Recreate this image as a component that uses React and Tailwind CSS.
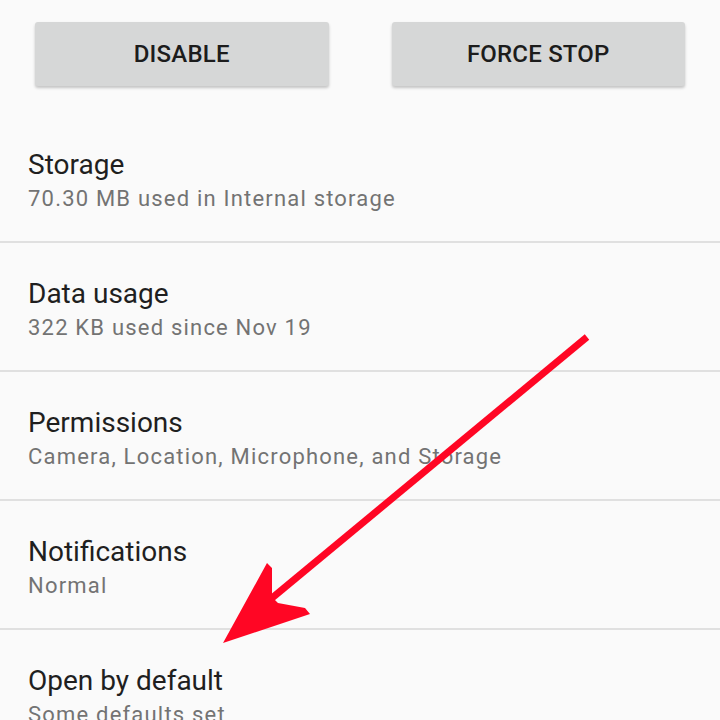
import React from 'react';

const rows = [
  { title: 'Storage', sub: '70.30 MB used in Internal storage' },
  { title: 'Data usage', sub: '322 KB used since Nov 19' },
  { title: 'Permissions', sub: 'Camera, Location, Microphone, and Storage' },
  { title: 'Notifications', sub: 'Normal' },
  { title: 'Open by default', sub: 'Some defaults set' },
];

const ActionButton = ({ label }) => (
  <button className="flex-1 h-[64px] rounded-[3px] bg-[#d6d7d7] shadow-[0_2px_3px_rgba(0,0,0,0.22)] text-[24px] font-medium text-[#1c1c1c] tracking-[0.2px]">
    {label}
  </button>
);

const App = () => {
  return (
    <div className="relative w-[720px] h-[720px] overflow-hidden bg-[#fafafa] font-['Roboto',sans-serif]">
      {/* App actions */}
      <div className="flex gap-[63px] px-[35px] pt-[22px] pb-[28px]">
        <ActionButton label="DISABLE" />
        <ActionButton label="FORCE STOP" />
      </div>

      {/* Settings list */}
      <div>
        {rows.map(r => (
          <div key={r.title}>
            <div className="px-[28px] pt-[34px] pb-[27px]">
              <div className="text-[28px] leading-[34px] text-[#1f1f1f]">{r.title}</div>
              <div className="mt-[2px] text-[22px] leading-[30px] tracking-[1.2px] text-[#737373] whitespace-nowrap">{r.sub}</div>
            </div>
            <div className="h-[2px] bg-[#e0e0e0]" />
          </div>
        ))}
      </div>

      {/* Red pointer arrow */}
      <svg className="absolute inset-0 pointer-events-none" width="720" height="720" viewBox="0 0 720 720">
        <line x1="587" y1="337" x2="272" y2="598" stroke="#ff0624" strokeWidth="7" />
        <polygon
          points="223,643 267,563 272,568 272,597 278,603 305,608 310,614"
          fill="#ff0624"
        />
      </svg>
    </div>
  );
};

export default App;
